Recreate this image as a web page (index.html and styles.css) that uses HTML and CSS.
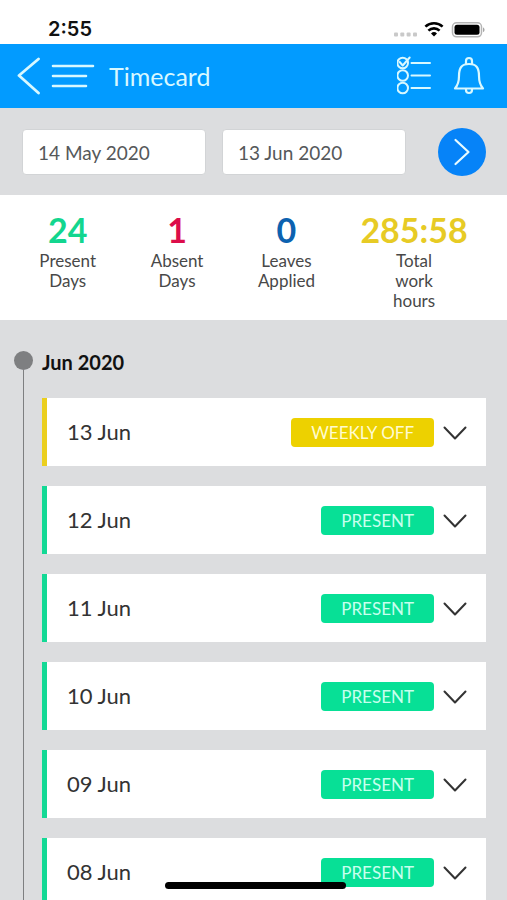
FILE: index.html
```html
<!DOCTYPE html>
<html lang="en">
<head>
<meta charset="utf-8">
<meta name="viewport" content="width=device-width, initial-scale=1">
<title>Timecard</title>
<link rel="stylesheet" href="styles.css">
</head>
<body>
<div class="app">
  <div class="status-bar">
    <time class="clock">2:55</time>
    <svg class="status-icons" width="92" height="20" viewBox="0 0 92 20" aria-hidden="true">
      <g fill="#c9c9c9"><rect x="1" y="11.500" width="4" height="4" rx="1"/><rect x="7.300" y="11.500" width="4" height="4" rx="1"/><rect x="13.600" y="11.500" width="4" height="4" rx="1"/><rect x="20" y="11.500" width="4" height="4" rx="1"/></g>
      <g fill="none" stroke="#000" stroke-width="2.600"><path d="M32.400 5.600a12.600 12.600 0 0 1 17.200 0"/><path d="M35.400 9.600a8.200 8.200 0 0 1 11.200 0"/></g>
      <path d="M41 15.500l-3-3a4.300 4.300 0 0 1 6 0z"/>
      <rect x="59.500" y="1.800" width="29" height="14" rx="4" fill="#fff" stroke="#b5b5b5" stroke-width="1.500"/>
      <rect x="61.500" y="3.800" width="25" height="10" rx="2.500"/>
      <path d="M90 6.500c2 .6 2 4 0 4.600z" fill="#a5a5a5"/>
    </svg>
  </div>

  <header class="header">
    <button class="icon-button" type="button" aria-label="Back">
      <svg width="24" height="40" viewBox="0 0 24 40"><path d="M22.500 3L3 19.500L22.500 37" stroke-width="2.800"/></svg>
    </button>
    <button class="icon-button menu" type="button" aria-label="Menu">
      <svg width="44" height="26" viewBox="0 0 44 26"><path d="M2 3H42M2 13H35M2 23H35" stroke-width="2.600"/></svg>
    </button>
    <h1 class="title">Timecard</h1>
    <button class="icon-button" type="button" aria-label="Tasks">
      <svg width="36" height="40" viewBox="0 0 36 40" stroke-width="2"><circle cx="5.700" cy="7" r="5.300"/><circle cx="5.700" cy="19.500" r="5.300"/><circle cx="5.700" cy="32" r="5.300"/><path d="M2.700 6l3 3.500l7-8M14.500 7H33M14.500 19.500H33M14.500 32H33"/></svg>
    </button>
    <button class="icon-button bell" type="button" aria-label="Notifications">
      <svg width="32" height="40" viewBox="0 0 32 40" stroke-width="2.200"><path d="M2 32.500C5 29 6 26 6 20C6 11.500 9 8 16 8S26 11.500 26 20C26 26 27 29 30 32.500Z"/><path d="M13 8V5a3 3 0 0 1 6 0V8M13 33v1a3 3 0 0 0 6 0v-1"/></svg>
    </button>
  </header>

  <form class="filters">
    <input class="date-field" type="text" aria-label="From date" value="14 May 2020">
    <input class="date-field" type="text" aria-label="To date" value="13 Jun 2020">
    <button class="go" type="button" aria-label="Show timecard">
      <svg width="48" height="48" viewBox="0 0 48 48"><path d="M17.500 12L30.500 24L17.500 36" stroke-width="2.200"/></svg>
    </button>
  </form>

  <section class="stats" aria-label="Summary">
    <div class="stat"><strong class="value present">24</strong><span class="label">Present Days</span></div>
    <div class="stat"><strong class="value absent">1</strong><span class="label">Absent Days</span></div>
    <div class="stat"><strong class="value leaves">0</strong><span class="label">Leaves Applied</span></div>
    <div class="stat"><strong class="value hours">285:58</strong><span class="label">Total work hours</span></div>
  </section>

  <main class="timeline">
    <div class="rail"><span class="dot"></span><span class="line"></span></div>
    <div class="entries">
      <h2 class="month">Jun 2020</h2>
      <article class="card off"><span class="day">13 Jun</span><span class="badge">WEEKLY OFF</span><button class="expand" type="button" aria-label="Expand 13 Jun"><svg width="24" height="24" viewBox="0 0 24 24"><path d="M1.500 7.500L12 18.500L22.500 7.500"/></svg></button></article>
      <article class="card"><span class="day">12 Jun</span><span class="badge">PRESENT</span><button class="expand" type="button" aria-label="Expand 12 Jun"><svg width="24" height="24" viewBox="0 0 24 24"><path d="M1.500 7.500L12 18.500L22.500 7.500"/></svg></button></article>
      <article class="card"><span class="day">11 Jun</span><span class="badge">PRESENT</span><button class="expand" type="button" aria-label="Expand 11 Jun"><svg width="24" height="24" viewBox="0 0 24 24"><path d="M1.500 7.500L12 18.500L22.500 7.500"/></svg></button></article>
      <article class="card"><span class="day">10 Jun</span><span class="badge">PRESENT</span><button class="expand" type="button" aria-label="Expand 10 Jun"><svg width="24" height="24" viewBox="0 0 24 24"><path d="M1.500 7.500L12 18.500L22.500 7.500"/></svg></button></article>
      <article class="card"><span class="day">09 Jun</span><span class="badge">PRESENT</span><button class="expand" type="button" aria-label="Expand 09 Jun"><svg width="24" height="24" viewBox="0 0 24 24"><path d="M1.500 7.500L12 18.500L22.500 7.500"/></svg></button></article>
      <article class="card"><span class="day">08 Jun</span><span class="badge">PRESENT</span><button class="expand" type="button" aria-label="Expand 08 Jun"><svg width="24" height="24" viewBox="0 0 24 24"><path d="M1.500 7.500L12 18.500L22.500 7.500"/></svg></button></article>
    </div>
  </main>
  <div class="home-indicator"></div>
</div>
</body>
</html>
```
FILE: styles.css
```css
* {
  box-sizing: border-box;
}

body {
  margin: 0;
  font-family: Lato, "Liberation Sans", sans-serif;
  color: #333;
  background: #dcdddf;
}

button {
  padding: 0;
  border: 0;
  background: none;
  cursor: pointer;
}

svg {
  display: block;
}

.app {
  display: flex;
  flex-direction: column;
  height: 100vh;
}

.status-bar,
.header,
.filters,
.stats {
  flex: none;
}

.status-bar {
  display: flex;
  align-items: flex-end;
  justify-content: space-between;
  height: 44px;
  padding: 0 22px 3px 48px;
  background: #fff;
}

.clock {
  font: 600 20px/24px Inter, "Liberation Sans", sans-serif;
  color: #111;
}

.header {
  display: flex;
  align-items: center;
  height: 64px;
  padding: 0 22px 0 16px;
  background: #029bff;
}

.icon-button svg {
  fill: none;
  stroke: #d8f8ff;
  stroke-linecap: round;
  stroke-linejoin: round;
}

.menu {
  margin-left: 11px;
}

.title {
  flex: 1;
  margin: 0 0 0 14px;
  font-size: 25px;
  line-height: 32px;
  font-weight: 400;
  color: #d8f8ff;
}

.bell {
  margin-left: 20px;
}

.filters {
  display: flex;
  align-items: center;
  gap: 16px;
  padding: 20px 21px 19px 22px;
}

.date-field {
  flex: 1;
  min-width: 0;
  height: 46px;
  padding: 0 15px;
  border: 1px solid #d2d4d6;
  border-radius: 4px;
  background: #fff;
  font: 400 19px/24px Lato, "Liberation Sans", sans-serif;
  color: #55585a;
}

.go {
  width: 48px;
  height: 48px;
  margin-left: 16px;
  border-radius: 50%;
  background: #0683f8;
}

.go svg {
  fill: none;
  stroke: #e8fbff;
  stroke-linecap: round;
  stroke-linejoin: round;
}

.stats {
  display: grid;
  grid-template-columns: 3fr 3fr 3fr 4fr;
  padding: 14px 20px 9px 13px;
  background: #fff;
}

.stat {
  display: flex;
  flex-direction: column;
  align-items: center;
}

.value {
  font-size: 34px;
  line-height: 42px;
  font-weight: 700;
}

.value.present {
  color: #13d68f;
}

.value.absent {
  color: #dc0d4a;
}

.value.leaves {
  color: #0c62b0;
}

.value.hours {
  color: #e7cb25;
}

.label {
  width: min-content;
  font-size: 17px;
  line-height: 20px;
  text-align: center;
  color: #484848;
}

.timeline {
  display: flex;
  flex: 1;
  min-height: 0;
  padding: 30px 21px 0 14px;
  overflow: hidden;
}

.rail {
  display: flex;
  flex-direction: column;
  align-items: center;
  width: 19px;
  margin-right: 9px;
}

.dot {
  flex: none;
  width: 19px;
  height: 19px;
  margin-top: 1px;
  border-radius: 50%;
  background: #7e7f81;
}

.line {
  flex: 1;
  width: 1px;
  background: #7e7f81;
}

.entries {
  flex: 1;
}

.month {
  margin: 0 0 24px;
  font-size: 20px;
  line-height: 24px;
  font-weight: 700;
  color: #111;
}

.card {
  display: flex;
  align-items: center;
  height: 68px;
  margin-bottom: 20px;
  padding: 0 19px 0 20px;
  border-left: 5px solid #13d995;
  background: #fff;
}

.card.off {
  border-left-color: #ebcf1e;
}

.day {
  flex: 1;
  font-size: 22px;
  line-height: 28px;
}

.badge {
  padding: 1px 20px 0;
  border-radius: 4px;
  background: #07e096;
  font-size: 17px;
  line-height: 28px;
  color: #c8ffee;
}

.off .badge {
  background: #edd100;
  color: #fffbd0;
}

.expand {
  margin-left: 9px;
}

.expand svg {
  fill: none;
  stroke: #333;
  stroke-width: 2;
  stroke-linecap: round;
  stroke-linejoin: round;
}

.home-indicator {
  position: fixed;
  bottom: 11px;
  left: 50%;
  width: 181px;
  height: 7px;
  margin-left: -89px;
  border-radius: 4px;
  background: #000;
}
```
